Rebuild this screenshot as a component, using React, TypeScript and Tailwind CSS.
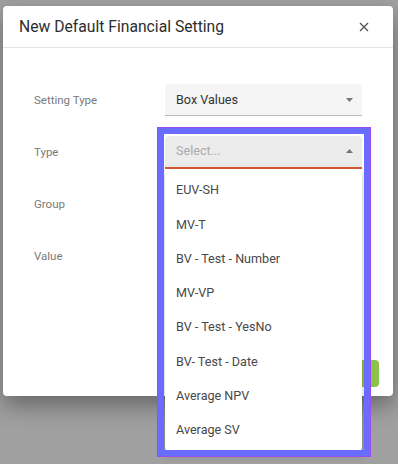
import { useState } from 'react';

const TYPE_OPTIONS = [
  'EUV-SH',
  'MV-T',
  'BV - Test - Number',
  'MV-VP',
  'BV - Test - YesNo',
  'BV- Test - Date',
  'Average NPV',
  'Average SV',
];

const FONT = { fontFamily: "Roboto, 'Liberation Sans', sans-serif" };

function Caret({ up = false }: { up?: boolean }) {
  return (
    <svg width="7" height="4" viewBox="0 0 7 4" className="shrink-0">
      <path d={up ? 'M0 4 L3.5 0 L7 4 Z' : 'M0 0 L3.5 4 L7 0 Z'} fill="#777" />
    </svg>
  );
}

function Row({ label, children }: { label: string; children?: React.ReactNode }) {
  return (
    <div className="flex items-center h-[32px]">
      <div className="w-[162px] pl-[31px] pt-[2px] text-[11.5px] text-[#7a7a7a]">{label}</div>
      <div className="w-[197px] relative">{children}</div>
    </div>
  );
}

export default function App() {
  const [value, setValue] = useState('');

  return (
    <div className="relative w-[398px] h-[464px] overflow-hidden bg-[#a0a0a0] pt-[6px] pl-[3px]" style={FONT}>
      {/* Modal */}
      <div className="relative w-[390px] h-[390px] bg-white rounded-[4px] shadow-[0_10px_22px_rgba(0,0,0,0.35)] flex flex-col">
        <div className="h-[42px] border-b border-[#e4e4e4] flex items-center justify-between pl-[16px] pr-[24px]">
          <span className="text-[15.7px] text-[#2d2d2d] pt-[1px]">New Default Financial Setting</span>
          <svg width="10" height="10" viewBox="0 0 10 10" className="mt-[1px]">
            <path d="M1 1 L9 9 M9 1 L1 9" stroke="#555" strokeWidth="1.4" />
          </svg>
        </div>

        <div className="flex flex-col gap-[20px] pt-[36px]">
          <Row label="Setting Type">
            <div className="h-[32px] bg-[#f5f5f5] rounded-t-[4px] border-b border-[#b9b9b9] flex items-center justify-between pl-[11px] pr-[9px]">
              <span className="text-[12.6px] text-[#333] pt-[2px]">Box Values</span>
              <Caret />
            </div>
          </Row>

          <Row label="Type">
            <div className="h-[33px] bg-[#ececec] rounded-t-[4px] border-b-2 border-[#e05a33] flex items-center justify-between pl-[11px] pr-[9px]">
              <span className="text-[12.6px] text-[#ababab] pt-[1px]">{value || 'Select...'}</span>
              <Caret up />
            </div>
            {/* Open dropdown list */}
            <div className="absolute left-0 top-full z-20 w-[197px] bg-white rounded-b-[4px] shadow-[0_3px_8px_rgba(0,0,0,0.25)] pt-[5px] pb-[3px]">
              {TYPE_OPTIONS.map((opt) => (
                <div
                  key={opt}
                  onClick={() => setValue(opt)}
                  className="h-[34.3px] flex items-center pl-[11px] text-[12.6px] text-[#484848] cursor-pointer"
                >
                  {opt}
                </div>
              ))}
            </div>
          </Row>

          <Row label="Group" />
          <Row label="Value" />
        </div>

        <div className="mt-auto flex justify-end pr-[14px] pb-[9px]">
          <button className="w-[70px] h-[27px] rounded-[4px] bg-[#8bc34a] text-white text-[12px]">Save</button>
        </div>
      </div>

      {/* Highlight frame over the dropdown */}
      <div className="absolute left-[157px] top-[127px] w-[214px] h-[330px] z-30 pointer-events-none border border-[#9650f2]">
        <div className="w-full h-full border-[6px] border-[#6a6cff]" />
      </div>
    </div>
  );
}
